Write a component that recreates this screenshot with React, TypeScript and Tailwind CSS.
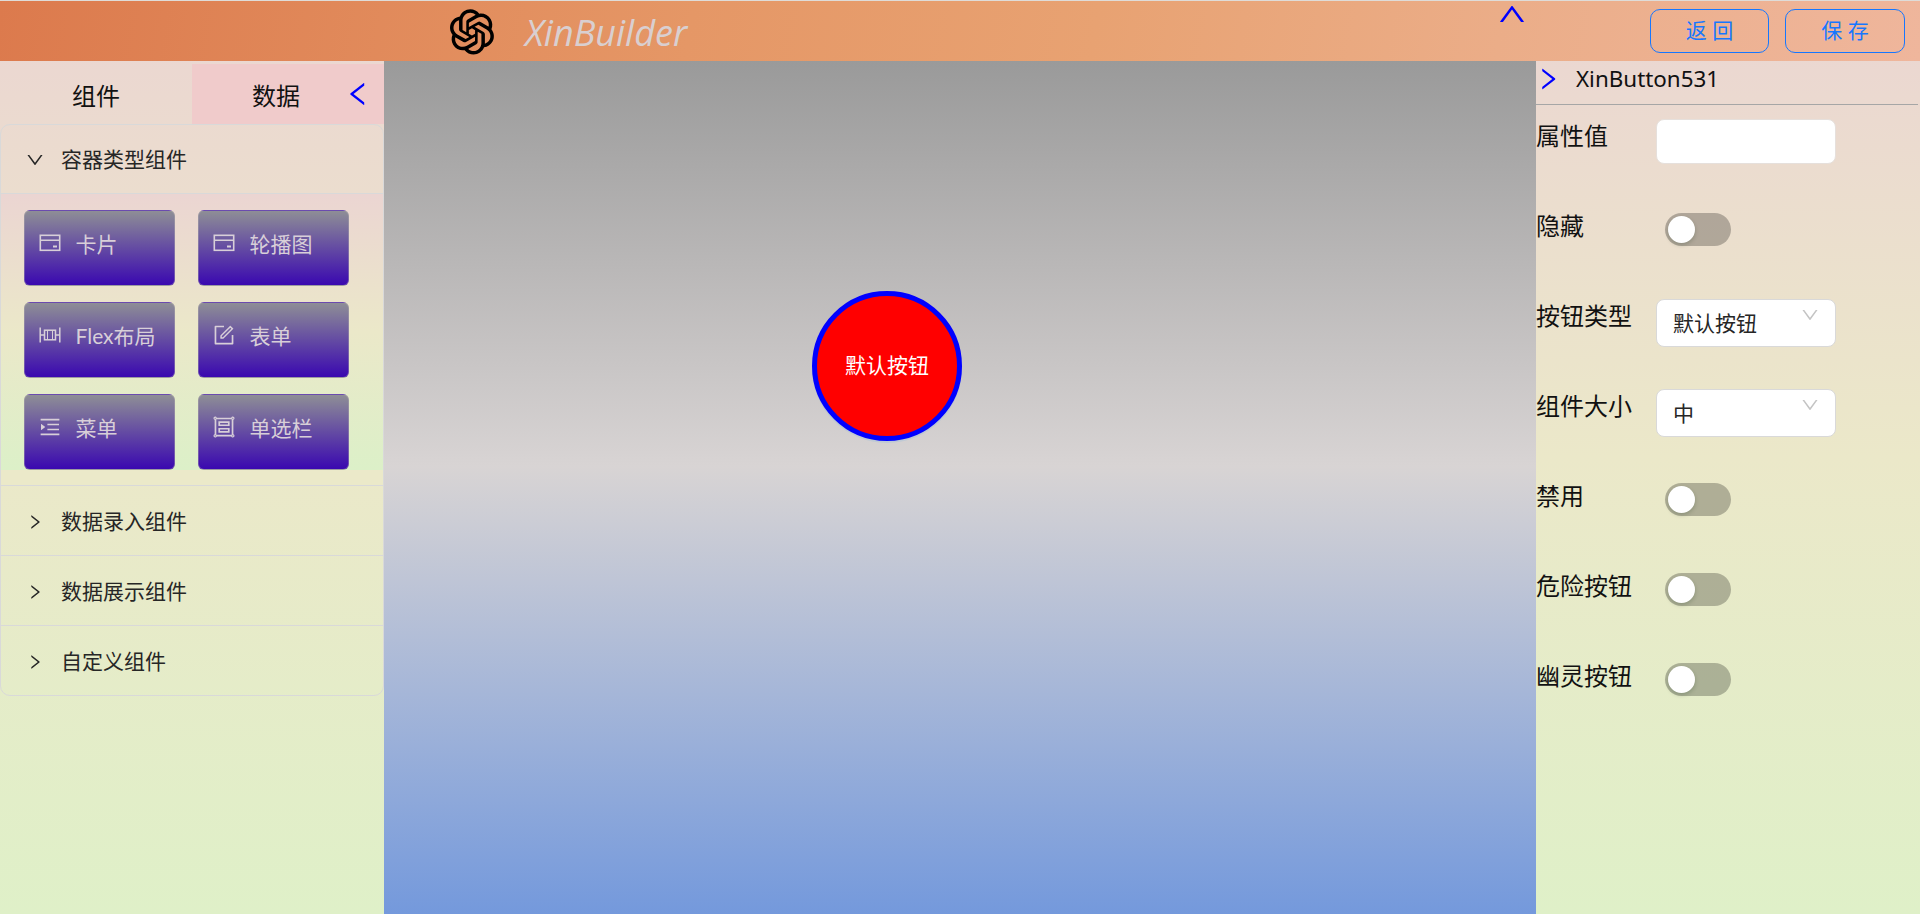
import React from "react";
import {
  AiOutlineOpenAI,
  AiOutlineUp,
  AiOutlineLeft,
  AiOutlineRight,
  AiOutlineDown,
  AiOutlineForm,
  AiOutlineMenuUnfold,
  AiOutlineGroup,
} from "react-icons/ai";

function CardIcon({ className }: { className?: string }) {
  return (
    <svg viewBox="0 0 24 24" className={className} fill="none" stroke="currentColor" strokeWidth="1.6">
      <rect x="2.3" y="4.3" width="19.4" height="15" />
      <path d="M2.3 9.2H21.7" />
      <path d="M15 15.6H19" strokeWidth="2" />
    </svg>
  );
}

function FlexIcon({ className }: { className?: string }) {
  return (
    <svg viewBox="0 0 24 24" className={className} fill="none" stroke="currentColor" strokeWidth="1.5">
      <path d="M2.2 4.5V19.5M21.8 4.5V19.5" />
      <path d="M2.2 12H6.5M17.5 12H21.8" />
      <rect x="6.5" y="7.2" width="11" height="9.6" />
      <path d="M9.5 7.2V16.8M14.5 7.2V16.8" strokeWidth="1" />
    </svg>
  );
}

const tiles = [
  { icon: CardIcon, label: "卡片" },
  { icon: CardIcon, label: "轮播图" },
  { icon: FlexIcon, label: "Flex布局" },
  { icon: AiOutlineForm, label: "表单" },
  { icon: AiOutlineMenuUnfold, label: "菜单" },
  { icon: AiOutlineGroup, label: "单选栏" },
];

function CollapseRow({ label }: { label: string }) {
  return (
    <div className="flex h-[70px] items-center border-t border-[#d9d9d9] pt-[2px] pl-[25px] text-[21px] text-[#262626]">
      <AiOutlineRight className="mr-[17px] h-[18px] w-[18px]" />
      <span>{label}</span>
    </div>
  );
}

function Toggle() {
  return (
    <div className="mt-[4px] ml-[9px] h-[33px] w-[66px] rounded-full bg-black/25 p-[3px]">
      <div className="h-[27px] w-[27px] rounded-full bg-white shadow-[0_2px_4px_0_rgba(0,35,11,0.2)]" />
    </div>
  );
}

function Select({ value }: { value: string }) {
  return (
    <div className="flex h-[48px] w-[180px] items-start justify-between rounded-[8px] border border-[#d9d9d9] bg-white pr-[15px] pl-[16px] text-[21px] leading-[46px] text-[#262626]">
      <span>{value}</span>
      <AiOutlineDown className="mt-[5px] h-[20px] w-[20px] text-[#c4c4c4]" />
    </div>
  );
}

function Row({ label, children }: { label: string; children: React.ReactNode }) {
  return (
    <div className="flex h-[90px] items-start">
      <div className="h-[33px] w-[120px] text-[24px] leading-[33px] text-[#111]">{label}</div>
      {children}
    </div>
  );
}

export default function App() {
  return (
    <div className="flex h-[914px] w-full flex-col overflow-hidden bg-[linear-gradient(180deg,#ebd5d2_0%,#ebe8c9_50%,#dff0c8_100%)] font-['Noto_Sans','Noto_Sans_CJK_SC',sans-serif]">
      <div className="h-px bg-[#dfdcd8]" />
      <header className="relative flex h-[60px] items-center bg-[linear-gradient(100deg,#dc7a4d_0%,#e59766_36%,#e8a272_57%,#ebad88_78%,#efb69c_100%)]">
        <AiOutlineOpenAI className="ml-[443px] h-[58px] w-[58px] text-black" />
        <span className="ml-[24px] pt-[3px] font-['Open_Sans',sans-serif] text-[36px] text-[#d9cfd0] italic">XinBuilder</span>
        <AiOutlineUp className="absolute top-[-3px] left-[1496px] h-[32px] w-[32px] text-[#0000ff]" />
        <div className="mr-[15px] ml-auto flex gap-[16px]">
          <button className="h-[44px] w-[119px] rounded-[10px] border border-[#1677ff] text-[21px] text-[#1677ff]">返 回</button>
          <button className="h-[44px] w-[120px] rounded-[10px] border border-[#1677ff] text-[21px] text-[#1677ff]">保 存</button>
        </div>
      </header>
      <div className="flex min-h-0 flex-1">
        <aside className="w-[384px] shrink-0">
          <div className="flex h-[63px] items-stretch text-[24px] text-[#111]">
            <div className="flex w-[192px] items-center justify-center pt-[6px]">组件</div>
            <div className="relative mt-[3px] flex w-[192px] items-center justify-center bg-[#f0cbcb] pt-[3px] pr-[24px]">
              数据
              <AiOutlineLeft className="absolute top-[15px] left-[151px] h-[30px] w-[30px] text-[#0000ff]" />
            </div>
          </div>
          <div className="overflow-hidden rounded-[10px] border border-[#d9d9d9]">
            <div className="flex h-[68px] items-center pt-[1px] pl-[24px] text-[21px] text-[#262626]">
              <AiOutlineDown className="mr-[16px] h-[20px] w-[20px]" />
              <span>容器类型组件</span>
            </div>
            <div className="h-[277px] border-t border-[#d9d9d9] bg-[linear-gradient(180deg,#ebd5d2_0%,#ebe8c9_50%,#dcf0c8_100%)] pt-[16px] pl-[23px]">
              <div className="grid grid-cols-[151px_151px] gap-x-[23px] gap-y-[16px]">
                {tiles.map((t) => (
                  <div
                    key={t.label}
                    className="flex h-[76px] items-start rounded-[6px] border border-[#b5b0b0]/40 bg-[linear-gradient(180deg,#8e8e96_0%,#3a08b0_100%)] pt-[18px] pl-[13px] font-['Lato','Noto_Sans_CJK_SC',sans-serif] text-[21px] leading-[30px] text-[#d8cfd8]"
                  >
                    <t.icon className="mt-[2px] h-[24px] w-[24px] shrink-0" />
                    <span className="ml-[13.5px]">{t.label}</span>
                  </div>
                ))}
              </div>
            </div>
            <div className="h-[15px] bg-[#ebe9c9]" />
            <CollapseRow label="数据录入组件" />
            <CollapseRow label="数据展示组件" />
            <CollapseRow label="自定义组件" />
          </div>
        </aside>
        <main className="relative flex-1 bg-[linear-gradient(180deg,#9a9a9a_0%,#d8d4d4_47.5%,#7499dc_100%)]">
          <button className="absolute top-[230px] left-[428px] h-[150px] w-[150px] rounded-full border-[5px] border-[#0000ff] bg-[#ff0000] text-[21px] text-white shadow-[0_2px_0_rgba(5,145,255,0.1)]">
            默认按钮
          </button>
        </main>
        <aside className="w-[384px] shrink-0">
          <div className="mr-[2px] flex h-[44px] items-center border-b border-[#a6a6a6] pb-[8px]">
            <AiOutlineRight className="-ml-[2px] h-[28px] w-[28px] text-[#0000ff]" />
            <span className="ml-[14px] text-[22.4px] text-[#111]">XinButton531</span>
          </div>
          <div className="pt-[14px]">
            <Row label="属性值">
              <div className="h-[45px] w-[180px] rounded-[8px] border border-[#e6e0dc] bg-white" />
            </Row>
            <Row label="隐藏"><Toggle /></Row>
            <Row label="按钮类型"><Select value="默认按钮" /></Row>
            <Row label="组件大小"><Select value="中" /></Row>
            <Row label="禁用"><Toggle /></Row>
            <Row label="危险按钮"><Toggle /></Row>
            <Row label="幽灵按钮"><Toggle /></Row>
          </div>
        </aside>
      </div>
    </div>
  );
}
